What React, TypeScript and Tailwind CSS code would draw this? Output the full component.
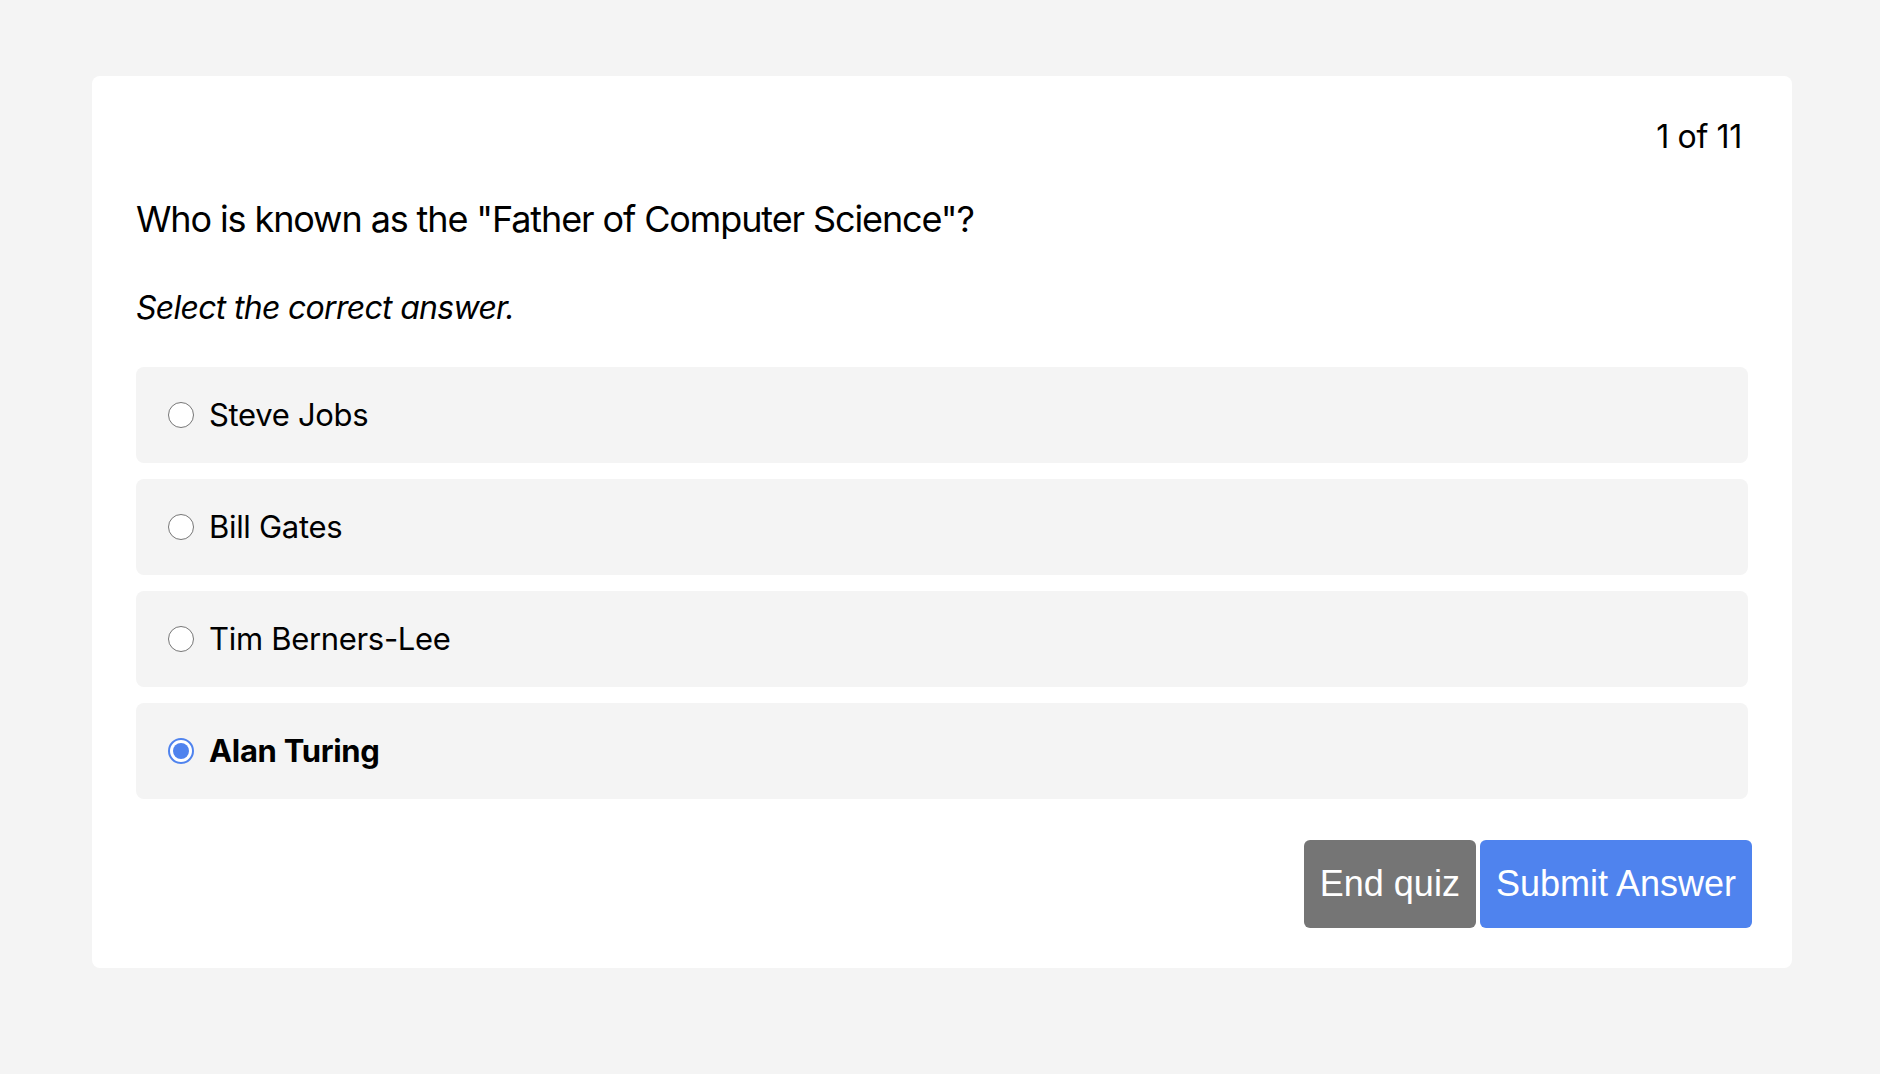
import React, { useState } from 'react';

const options = ['Steve Jobs', 'Bill Gates', 'Tim Berners-Lee', 'Alan Turing'];

const Radio: React.FC<{ checked: boolean }> = ({ checked }) =>
  checked ? (
    <span className="w-[26px] h-[26px] rounded-full border-2 border-[#4f83ee] bg-white flex items-center justify-center shrink-0">
      <span className="w-[16px] h-[16px] rounded-full bg-[#4f83ee]"></span>
    </span>
  ) : (
    <span className="w-[26px] h-[26px] rounded-full border-[1.5px] border-[#767676] bg-white shrink-0"></span>
  );

export default function App() {
  const [selected, setSelected] = useState('Alan Turing');

  return (
    <div className="min-h-screen bg-[#f4f4f4] pl-[92px] pr-[88px] pt-[76px] font-['Inter',sans-serif] text-black">
      <div className="bg-white rounded-lg px-[44px] pt-[42px] pb-[40px]">
        <div className="flex justify-end pr-[6px] text-[32px] leading-[38px] tracking-[-0.01em]">1 of 11</div>

        <h2 className="mt-[42px] text-[36px] leading-[43px] font-normal tracking-[-0.031em]">
          Who is known as the "Father of Computer Science"?
        </h2>

        <p className="mt-[48px] text-[32px] leading-[38px] italic tracking-[-0.022em]">Select the correct answer.</p>

        <div className="mt-[40px] flex flex-col gap-4">
          {options.map(opt => (
            <div
              key={opt}
              onClick={() => setSelected(opt)}
              className="h-[96px] bg-[#f4f4f4] rounded-lg flex items-center pl-[32px] gap-[15px] cursor-pointer"
            >
              <Radio checked={selected === opt} />
              <span
                className={`text-[31px] leading-[38px] tracking-[-0.01em] ${selected === opt ? 'font-bold' : ''}`}
              >
                {opt}
              </span>
            </div>
          ))}
        </div>

        <div className="mt-[41px] -mr-1 flex justify-end gap-1 font-['Liberation_Sans',Arial,sans-serif]">
          <button className="bg-[#757575] text-white text-[36px] leading-[42px] px-4 py-[23px] rounded-md">
            End quiz
          </button>
          <button className="bg-[#4f83ee] text-white text-[36px] leading-[42px] px-4 py-[23px] rounded-md">
            Submit Answer
          </button>
        </div>
      </div>
    </div>
  );
}
